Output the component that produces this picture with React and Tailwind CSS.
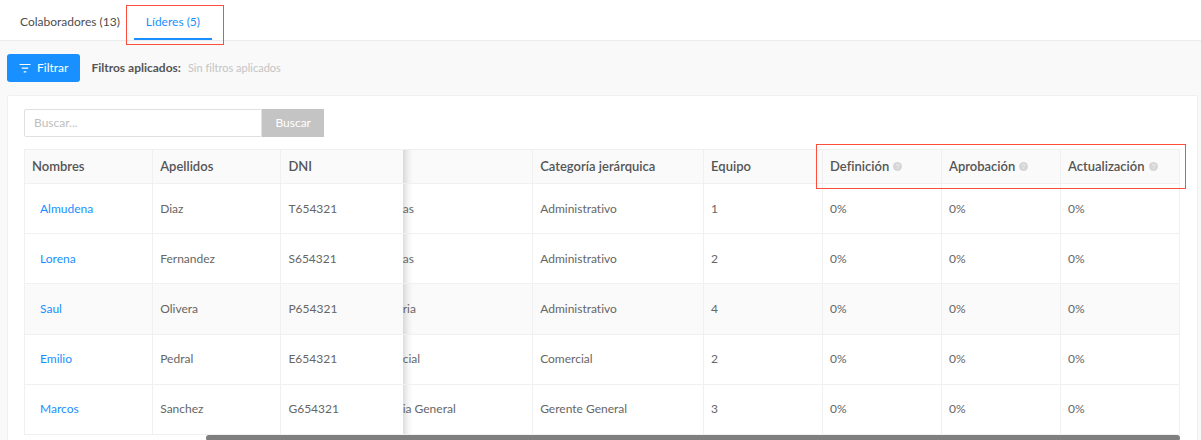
import { useState } from "react";

const TABS = [
  { id: "colaboradores", label: "Colaboradores (13)" },
  { id: "lideres", label: "Líderes (5)" },
];

const leaders = [
  { name: "Almudena", surname: "Diaz", dni: "T654321", area: "as", category: "Administrativo", team: 1 },
  { name: "Lorena", surname: "Fernandez", dni: "S654321", area: "as", category: "Administrativo", team: 2 },
  { name: "Saul", surname: "Olivera", dni: "P654321", area: "ria", category: "Administrativo", team: 4, active: true },
  { name: "Emilio", surname: "Pedral", dni: "E654321", area: "cial", category: "Comercial", team: 2 },
  { name: "Marcos", surname: "Sanchez", dni: "G654321", area: "ia General", category: "Gerente General", team: 3 },
];

const progressColumns = ["Definición", "Aprobación", "Actualización"];

const headClass = "relative h-[34px] border-b border-[#f0f0f0] px-[7px] text-left text-[13px] font-semibold text-[#555]";
const cellClass = "border-r border-b border-[#f0f0f0] px-[7px]";
const edgeShadow = "shadow-[inset_10px_0_8px_-8px_rgba(0,0,0,0.2)]";

function FilterIcon() {
  return (
    <svg className="h-3 w-3" viewBox="0 0 12 12" fill="none" stroke="currentColor" strokeWidth="1.2" aria-hidden="true">
      <path d="M.5 2.5h11M2.8 6.2h6.4M4.7 9.9h2.6" />
    </svg>
  );
}

function HelpIcon() {
  return (
    <svg className="h-[9px] w-[9px] shrink-0" viewBox="0 0 10 10" aria-hidden="true">
      <circle cx="5" cy="5" r="5" fill="#d6d6d6" />
      <path d="M3.6 4a1.4 1.4 0 1 1 2 1.2c-.5.3-.6.4-.6.9" fill="none" stroke="#f2f2f2" strokeWidth="0.9" />
      <circle cx="5" cy="7.5" r="0.55" fill="#f2f2f2" />
    </svg>
  );
}

export default function App() {
  const [tab, setTab] = useState("lideres");
  const [search, setSearch] = useState("");

  return (
    <div className="flex h-screen flex-col overflow-hidden bg-[#f9f9f9] font-['Lato','Open_Sans',sans-serif] text-xs text-[#666] [font-variant-ligatures:none]">
      {/* Tabs */}
      <nav className="flex h-[41px] shrink-0 gap-0.5 border-b border-[#ececec] bg-white pl-2">
        {TABS.map((item) => (
          <button
            key={item.id}
            type="button"
            onClick={() => setTab(item.id)}
            className={`relative flex cursor-pointer items-center px-3 pt-1 ${
              tab === item.id ? "text-[#1890ff]" : "text-[#4d4d4d]"
            }`}
          >
            {item.label}
            {tab === item.id && (
              <>
                <span className="absolute inset-x-0 bottom-0 h-0.5 bg-[#1890ff]" />
                <span className="absolute -right-3 -bottom-[5px] -left-2 top-[5px] border border-[#ff4d3d]" />
              </>
            )}
          </button>
        ))}
      </nav>

      {/* Filters */}
      <div className="flex shrink-0 items-center px-[7px] py-[13px]">
        <button type="button" className="flex h-7 cursor-pointer items-center gap-1.5 rounded-[3px] bg-[#1890ff] px-3 text-white">
          <FilterIcon />
          Filtrar
        </button>
        <span className="ml-[11px] font-bold text-[#555]">Filtros aplicados:</span>
        <span className="ml-[7px] text-[11px] text-[#c4c4c4]">Sin filtros aplicados</span>
      </div>

      {/* Card */}
      <main className="mr-[3px] ml-[7px] flex-1 rounded-t-xs border border-b-0 border-[#f0f0f0] bg-white pt-[13px] pr-[17px] pl-4">
        <form className="flex h-7 w-[300px]" onSubmit={(event) => event.preventDefault()}>
          <input
            type="text"
            aria-label="Buscar"
            placeholder="Buscar..."
            value={search}
            onChange={(event) => setSearch(event.target.value)}
            className="min-w-0 flex-1 rounded-l-xs border border-[#e0e0e0] px-[9px] outline-none placeholder:text-[#c0c0c0]"
          />
          <button type="submit" className="cursor-pointer bg-[#c4c4c4] px-[13px] text-white">
            Buscar
          </button>
        </form>

        <table className="mt-3 h-[286px] w-full table-fixed border-separate border-spacing-0 border-t border-l border-[#f0f0f0]">
          <colgroup>
            <col className="w-[11.1%]" />
            <col className="w-[11.1%]" />
            <col className="w-[10.5%]" />
            <col className="w-[11.3%]" />
            <col className="w-[14.8%]" />
            <col className="w-[10.3%]" />
            <col className="w-[10.3%]" />
            <col className="w-[10.3%]" />
            <col className="w-[10.3%]" />
          </colgroup>
          <thead className="bg-[#fafafa]">
            <tr>
              <th className={`${headClass} border-r`}>Nombres</th>
              <th className={`${headClass} border-r`}>Apellidos</th>
              <th className={headClass}>DNI</th>
              <th className={`${headClass} border-r ${edgeShadow}`} aria-label="Área" />
              <th className={`${headClass} border-r`}>Categoría jerárquica</th>
              <th className={`${headClass} border-r`}>Equipo</th>
              {progressColumns.map((label, index) => (
                <th key={label} className={`${headClass} border-r`}>
                  <span className="flex items-center gap-1">
                    {label}
                    <HelpIcon />
                  </span>
                  {index === 0 && (
                    <span className="absolute -top-1.5 -bottom-1.5 -left-[7px] w-[calc(300%+16px)] border border-[#ff4d3d]" />
                  )}
                </th>
              ))}
            </tr>
          </thead>
          <tbody>
            {leaders.map((leader) => (
              <tr key={leader.dni} className={`h-[50px] ${leader.active ? "bg-[#fafafa]" : ""}`}>
                <td className={cellClass}>
                  <a href="#" className="pl-2 text-[#1890ff]">
                    {leader.name}
                  </a>
                </td>
                <td className={cellClass}>{leader.surname}</td>
                <td className="border-b border-[#f0f0f0] px-[7px]">{leader.dni}</td>
                <td className={`border-r border-b border-[#f0f0f0] ${edgeShadow}`}>{leader.area}</td>
                <td className={cellClass}>{leader.category}</td>
                <td className={cellClass}>{leader.team}</td>
                {progressColumns.map((label) => (
                  <td key={label} className={cellClass}>0%</td>
                ))}
              </tr>
            ))}
          </tbody>
        </table>
        <div className="ml-[182px] h-1.5 rounded-full bg-[#7f7f7f]" />
      </main>
    </div>
  );
}
